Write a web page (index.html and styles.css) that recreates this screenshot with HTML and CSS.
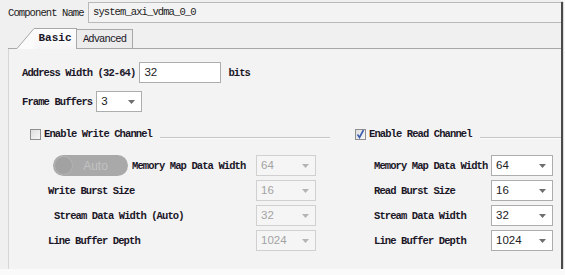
FILE: index.html
```html
<!DOCTYPE html>
<html lang="en">
<head>
  <meta charset="UTF-8">
  <title>VDMA Settings</title>
  <link rel="stylesheet" href="styles.css">
</head>
<body>
  <div class="window">
    <!-- Component name -->
    <div class="name-row">
      <span class="label plain">Component Name</span>
      <div class="name-field">system_axi_vdma_0_0</div>
    </div>

    <!-- Tabs -->
    <div class="tabs">
      <svg class="tab-slant" width="26" height="21" viewBox="0 0 26 21">
        <path d="M9 21 L26 1 L26 21 Z" fill="#fbfbfb"/>
        <path d="M0 20.5 H9 L26 0.5" fill="none" stroke="#a8a8a8"/>
      </svg>
      <div class="tab active">Basic</div>
      <div class="tab">Advanced</div>
      <div class="tab-fill"></div>
    </div>

    <main class="panel">
      <div class="field-row">
        <span class="label">Address Width (32-64)</span>
        <div class="input addr">32</div>
        <span class="label unit">bits</span>
      </div>
      <div class="field-row">
        <span class="label">Frame Buffers</span>
        <div class="select frames"><span>3</span><svg class="arrow" width="7" height="4" viewBox="0 0 7 4"><path d="M0 0H7L3.5 4Z"/></svg></div>
      </div>

      <div class="channels">
        <!-- Write channel -->
        <section class="channel write">
          <div class="channel-head">
            <span class="check"></span>
            <span class="label">Enable Write Channel</span>
            <span class="rule"></span>
          </div>
          <div class="channel-grid">
            <div class="cell">
              <span class="toggle"><span class="knob"></span><span class="toggle-text">Auto</span></span>
              <span class="label">Memory Map Data Width</span>
            </div>
            <div class="select disabled"><span>64</span><svg class="arrow" width="7" height="4" viewBox="0 0 7 4"><path d="M0 0H7L3.5 4Z"/></svg></div>

            <div class="cell"><span class="label">Write Burst Size</span></div>
            <div class="select disabled"><span>16</span><svg class="arrow" width="7" height="4" viewBox="0 0 7 4"><path d="M0 0H7L3.5 4Z"/></svg></div>

            <div class="cell indent"><span class="label">Stream Data Width (Auto)</span></div>
            <div class="select disabled"><span>32</span><svg class="arrow" width="7" height="4" viewBox="0 0 7 4"><path d="M0 0H7L3.5 4Z"/></svg></div>

            <div class="cell"><span class="label">Line Buffer Depth</span></div>
            <div class="select disabled"><span>1024</span><svg class="arrow" width="7" height="4" viewBox="0 0 7 4"><path d="M0 0H7L3.5 4Z"/></svg></div>
          </div>
        </section>

        <!-- Read channel -->
        <section class="channel read">
          <div class="channel-head">
            <span class="check checked">
              <svg width="9" height="10" viewBox="0 0 9 10"><path d="M1.5 5.5 L3.5 8.5 L7.5 1" fill="none" stroke="#3b5db0" stroke-width="1.6"/></svg>
            </span>
            <span class="label">Enable Read Channel</span>
            <span class="rule"></span>
          </div>
          <div class="channel-grid">
            <div class="cell"><span class="label">Memory Map Data Width</span></div>
            <div class="select"><span>64</span><svg class="arrow" width="7" height="4" viewBox="0 0 7 4"><path d="M0 0H7L3.5 4Z"/></svg></div>

            <div class="cell"><span class="label">Read Burst Size</span></div>
            <div class="select"><span>16</span><svg class="arrow" width="7" height="4" viewBox="0 0 7 4"><path d="M0 0H7L3.5 4Z"/></svg></div>

            <div class="cell"><span class="label">Stream Data Width</span></div>
            <div class="select"><span>32</span><svg class="arrow" width="7" height="4" viewBox="0 0 7 4"><path d="M0 0H7L3.5 4Z"/></svg></div>

            <div class="cell"><span class="label">Line Buffer Depth</span></div>
            <div class="select"><span>1024</span><svg class="arrow" width="7" height="4" viewBox="0 0 7 4"><path d="M0 0H7L3.5 4Z"/></svg></div>
          </div>
        </section>
      </div>
    </main>
  </div>
</body>
</html>
```

FILE: styles.css
```css
/* Page */
body {
  margin: 0;
  background: #fafafa;
  font-family: "Liberation Mono", monospace;
  color: #1b1728;
}
.window {
  width: 561px;
  height: 269px;
  background: #f0f0f0;
  box-shadow: 2px 2px 1px #4a4a4a;
  display: flex;
  flex-direction: column;
}

/* Labels */
.label {
  font-size: 10.5px;
  font-weight: bold;
  letter-spacing: -0.9px;
  white-space: nowrap;
}
.label.plain {
  font-weight: normal;
  color: #222;
}

/* Component name */
.name-row {
  display: flex;
  align-items: center;
  height: 21px;
  margin-top: 2px;
  padding-left: 8px;
}
.name-row .label {
  width: 80px;
}
.name-field {
  flex: 1;
  height: 21px;
  box-sizing: border-box;
  border: 1px solid #b9b9b9;
  border-right: none;
  background: #f3f3f3;
  padding-left: 4px;
  font-size: 10.5px;
  letter-spacing: -0.9px;
  line-height: 19px;
  color: #222;
}

/* Tabs */
.tabs {
  display: flex;
  align-items: flex-end;
  height: 21px;
  margin-top: 5px;
  margin-left: 8px;
}
.tab-slant {
  display: block;
}
.tab {
  height: 20px;
  box-sizing: border-box;
  border-top: 1px solid #a8a8a8;
  border-right: 1px solid #a8a8a8;
  border-bottom: 1px solid #a8a8a8;
  background: #ececec;
  font-size: 10.5px;
  letter-spacing: -0.9px;
  line-height: 18px;
  width: 56px;
  text-align: center;
}
.tab.active {
  height: 21px;
  width: 43px;
  border-bottom: none;
  background: linear-gradient(#fdfdfd, #f6f6f6);
  font-size: 11px;
  font-weight: bold;
  letter-spacing: 0;
  line-height: 19px;
}
.tab-fill {
  flex: 1;
  border-bottom: 1px solid #a8a8a8;
}

/* Panel */
.panel {
  flex: 1;
  margin-left: 8px;
  border-left: 1px solid #d6d6d6;
  background: #f3f3f3;
  padding: 13px 0 0 13px;
}
.field-row {
  display: flex;
  align-items: center;
  gap: 4px;
  height: 21px;
  margin-bottom: 8px;
}
.unit {
  margin-left: 3px;
}
.input,
.select {
  height: 21px;
  box-sizing: border-box;
  border: 1px solid #adadad;
  background: #fff;
  font-family: "Liberation Sans", Arial, sans-serif;
  font-size: 11.5px;
  color: #222;
  line-height: 19px;
  padding-left: 4px;
}
.input.addr {
  width: 82px;
}
.select {
  display: flex;
  align-items: center;
  justify-content: space-between;
  padding-right: 6px;
}
.select.frames {
  width: 46px;
}
.arrow {
  fill: #6e6e6e;
}
.select.disabled {
  border-color: #d0d0d0;
  background: #f5f5f5;
  color: #a3a3a3;
}
.select.disabled .arrow {
  fill: #b4b4b4;
}

/* Channels */
.channels {
  display: flex;
  gap: 25px;
  margin-top: 16px;
  margin-left: 8px;
}
.channel.write {
  width: 300px;
}
.channel.read {
  flex: 1;
}
.channel-head {
  display: flex;
  align-items: center;
  height: 12px;
}
.check {
  width: 11px;
  height: 11px;
  box-sizing: border-box;
  border: 1px solid #8f8f8f;
  background: linear-gradient(135deg, #dedede, #f7f7f7);
  margin-right: 3px;
  display: flex;
  align-items: center;
  justify-content: center;
}
.check svg {
  display: block;
}
.rule {
  flex: 1;
  align-self: flex-end;
  margin-left: 8px;
  margin-bottom: 1px;
  border-top: 1px solid #c6c6c6;
  border-bottom: 1px solid #fbfbfb;
}
.channel-grid {
  display: grid;
  grid-auto-rows: 21px;
  row-gap: 4px;
  margin-top: 15px;
}
.write .channel-grid {
  grid-template-columns: 208px 60px;
  padding-left: 18px;
}
.read .channel-grid {
  grid-template-columns: 117px 62px;
  padding-left: 19px;
}
.cell {
  display: flex;
  align-items: center;
  gap: 4px;
}
.cell.indent {
  padding-left: 6px;
}

/* Auto toggle */
.toggle {
  margin-left: 5px;
  width: 75px;
  height: 21px;
  box-sizing: border-box;
  border-radius: 11px;
  background: #a9a9a9;
  display: flex;
  align-items: center;
  padding-left: 1px;
}
.knob {
  width: 19px;
  height: 19px;
  box-sizing: border-box;
  border-radius: 50%;
  background: #a2a2a2;
  border: 1px solid #b4b4b4;
}
.toggle-text {
  flex: 1;
  text-align: center;
  padding-right: 10px;
  font-family: "Liberation Sans", Arial, sans-serif;
  font-size: 12px;
  color: #c2c2c2;
}
```
